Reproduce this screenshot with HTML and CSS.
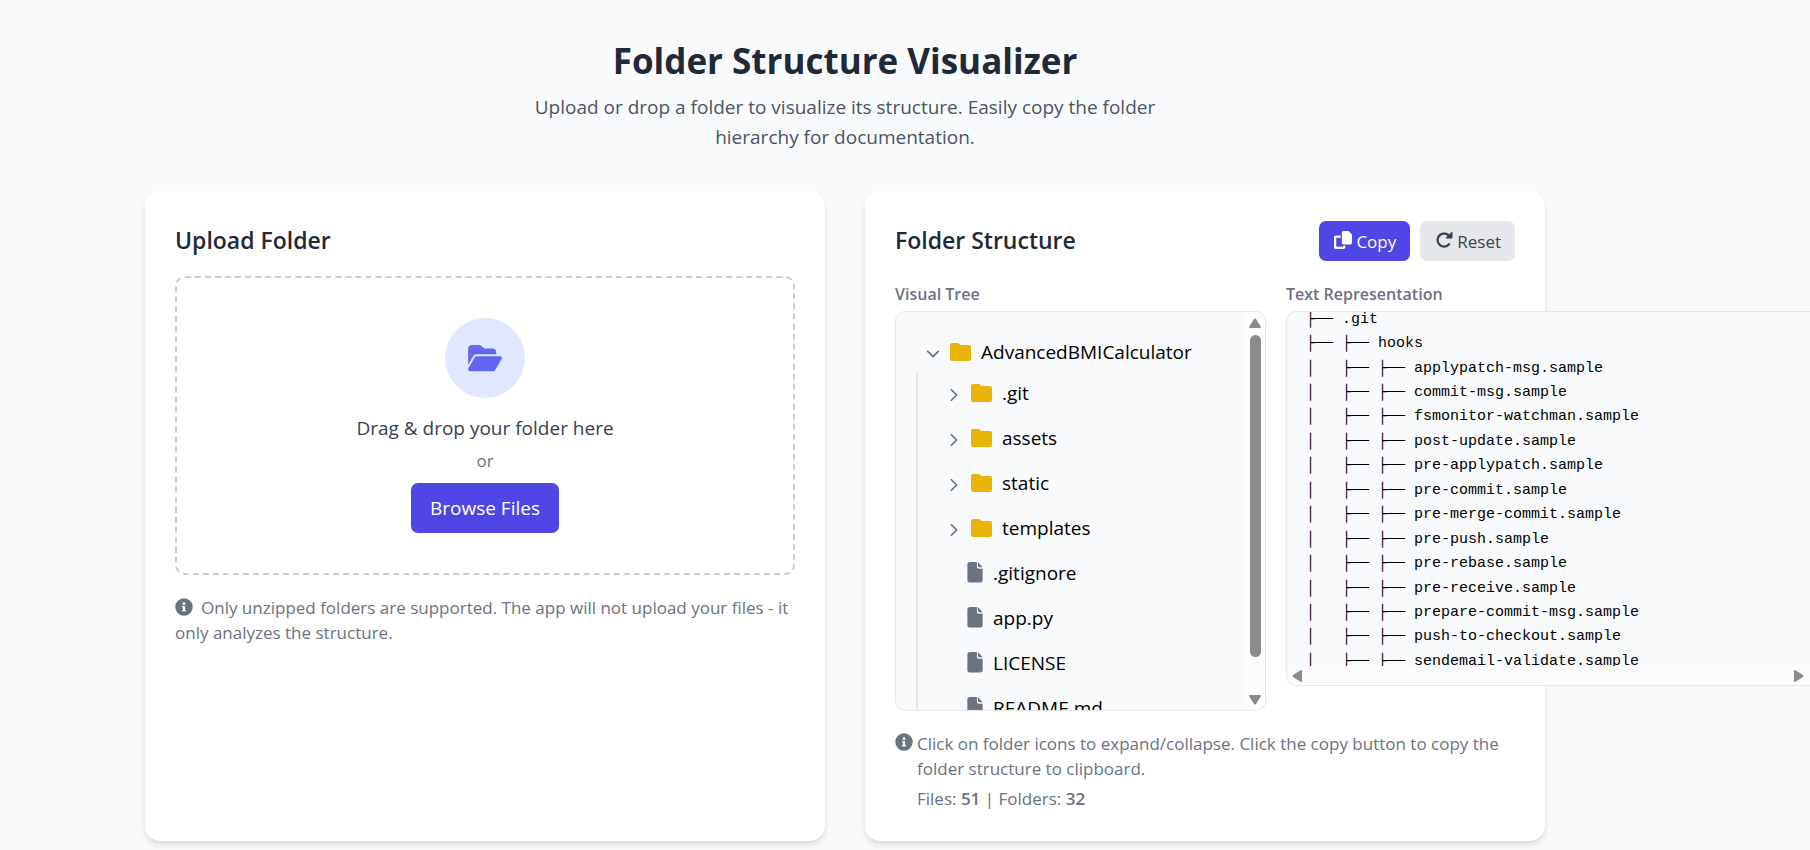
FILE: index.html
```html
<!DOCTYPE html>
<html lang="en">
<head>
<meta charset="utf-8">
<title>Folder Structure Visualizer</title>
<link rel="stylesheet" href="styles.css">
</head>
<body>
<svg class="sprite" aria-hidden="true">
  <symbol id="i-folder" viewBox="0 0 21 18"><path d="M2 0h5.500a2 2 0 0 1 1.400.6l.8.800a2 2 0 0 0 1.400.6H19a2 2 0 0 1 2 2v12a2 2 0 0 1-2 2H2a2 2 0 0 1-2-2V2a2 2 0 0 1 2-2z"/></symbol>
  <symbol id="i-file" viewBox="0 0 16 22"><path d="M3 0h7v5a2 2 0 0 0 2 2h4v12a2.500 2.500 0 0 1-2.500 2.500h-11A2.500 2.500 0 0 1 0 19V3a3 3 0 0 1 3-3zM11 0l5 5.500h-3.500A1.500 1.500 0 0 1 11 4z"/></symbol>
  <symbol id="i-down" viewBox="0 0 16 16"><path d="M2 5l6 6 6-6" fill="none" stroke="currentColor" stroke-width="2" stroke-linecap="round" stroke-linejoin="round"/></symbol>
  <symbol id="i-right" viewBox="0 0 16 16"><path d="M5 2l6 6-6 6" fill="none" stroke="currentColor" stroke-width="2" stroke-linecap="round" stroke-linejoin="round"/></symbol>
  <symbol id="i-info" viewBox="0 0 512 512"><path d="M256 8a248 248 0 1 0 0 496 248 248 0 0 0 0-496zm0 110a42 42 0 1 1 0 84 42 42 0 0 1 0-84zm56 254a12 12 0 0 1-12 12h-88a12 12 0 0 1-12-12v-24a12 12 0 0 1 12-12h12v-64h-12a12 12 0 0 1-12-12v-24a12 12 0 0 1 12-12h64a12 12 0 0 1 12 12v100h12a12 12 0 0 1 12 12z"/></symbol>
</svg>
<main class="page">
  <header class="intro">
    <h1 class="title">Folder Structure Visualizer</h1>
    <p class="lead">Upload or drop a folder to visualize its structure. Easily copy the folder hierarchy for documentation.</p>
  </header>
  <div class="cards">
    <section class="card">
      <div class="card-head"><h2 class="card-title">Upload Folder</h2></div>
      <div class="dropzone">
        <div class="drop-icon"><svg class="icon-open" viewBox="0 0 576 512"><path d="M88.700 223.800L0 375.800V96c0-35.300 28.700-64 64-64h117.500c17 0 33.300 6.700 45.300 18.700l26.500 26.500c12 12 28.300 18.700 45.300 18.700H416c35.300 0 64 28.700 64 64v32H144c-22.800 0-43.800 12.100-55.300 31.800zm27.600 16.100C122.100 230 132.600 224 144 224h400c11.500 0 22 6.100 27.700 16.100s5.700 22.200-.1 32.100l-112 192C453.900 474 443.400 480 432 480H32c-11.500 0-22-6.100-27.700-16.100s-5.700-22.200.1-32.100z"/></svg></div>
        <p class="drop-text">Drag &amp; drop your folder here</p>
        <p class="drop-or">or</p>
        <button class="btn btn-primary btn-large" type="button">Browse Files</button>
      </div>
      <p class="hint"><svg class="icon-info inline"><use href="#i-info"/></svg>Only unzipped folders are supported. The app will not upload your files - it only analyzes the structure.</p>
    </section>
    <section class="card">
      <div class="card-head">
        <h2 class="card-title">Folder Structure</h2>
        <div class="actions">
          <button class="btn btn-primary btn-icon" type="button"><svg class="icon-btn" viewBox="0 0 512 512"><path d="M272 0h125.500c8.500 0 16.600 3.400 22.600 9.400l82.500 82.500c6 6 9.400 14.100 9.400 22.600V336c0 26.500-21.500 48-48 48H272c-26.500 0-48-21.500-48-48V48c0-26.500 21.500-48 48-48zM48 128h144v64H64v256h192v-32h64v48c0 26.500-21.500 48-48 48H48c-26.500 0-48-21.500-48-48V176c0-26.500 21.500-48 48-48z"/></svg>Copy</button>
          <button class="btn btn-muted btn-icon" type="button"><svg class="icon-btn" viewBox="0 0 512 512"><path d="M420 170A185 185 0 1 0 400 375" fill="none" stroke="currentColor" stroke-width="64" stroke-linecap="round"/><path d="M470 30c10-10 27-3 27 11v150c0 13-11 24-24 24H323c-14 0-21-17-11-27z"/></svg>Reset</button>
        </div>
      </div>
      <div class="panels">
        <div class="panel-tree">
          <h3 class="label">Visual Tree</h3>
          <div class="tree-box">
            <div class="tree">
              <div class="row root"><svg class="chev"><use href="#i-down"/></svg><svg class="folder"><use href="#i-folder"/></svg><span>AdvancedBMICalculator</span></div>
              <ul class="children">
                <li class="row"><svg class="chev"><use href="#i-right"/></svg><svg class="folder"><use href="#i-folder"/></svg><span>.git</span></li>
                <li class="row"><svg class="chev"><use href="#i-right"/></svg><svg class="folder"><use href="#i-folder"/></svg><span>assets</span></li>
                <li class="row"><svg class="chev"><use href="#i-right"/></svg><svg class="folder"><use href="#i-folder"/></svg><span>static</span></li>
                <li class="row"><svg class="chev"><use href="#i-right"/></svg><svg class="folder"><use href="#i-folder"/></svg><span>templates</span></li>
                <li class="row leaf"><svg class="file"><use href="#i-file"/></svg><span>.gitignore</span></li>
                <li class="row leaf"><svg class="file"><use href="#i-file"/></svg><span>app.py</span></li>
                <li class="row leaf"><svg class="file"><use href="#i-file"/></svg><span>LICENSE</span></li>
                <li class="row leaf"><svg class="file"><use href="#i-file"/></svg><span>README.md</span></li>
              </ul>
            </div>
            <div class="vbar"><svg class="arrow" viewBox="0 0 12 10"><path d="M5 1q1-1 2 0l5 8q0 1-1 1H1q-1 0-1-1z"/></svg><div class="thumb"></div><svg class="arrow" viewBox="0 0 12 10"><path d="M5 9q1 1 2 0l5-8q0-1-1-1H1Q0 0 0 1z"/></svg></div>
          </div>
        </div>
        <div class="panel-text">
          <h3 class="label">Text Representation</h3>
          <div class="text-box">
            <div class="text-view"><pre class="listing">├── .git
├── ├── hooks
│   ├── ├── applypatch-msg.sample
│   ├── ├── commit-msg.sample
│   ├── ├── fsmonitor-watchman.sample
│   ├── ├── post-update.sample
│   ├── ├── pre-applypatch.sample
│   ├── ├── pre-commit.sample
│   ├── ├── pre-merge-commit.sample
│   ├── ├── pre-push.sample
│   ├── ├── pre-rebase.sample
│   ├── ├── pre-receive.sample
│   ├── ├── prepare-commit-msg.sample
│   ├── ├── push-to-checkout.sample
│   ├── ├── sendemail-validate.sample</pre></div>
            <div class="hbar"><svg class="arrow-h" viewBox="0 0 10 12"><path d="M1 5q-1 1 0 2l8 5q1 0 1-1V1q0-1-1-1z"/></svg><svg class="arrow-h" viewBox="0 0 10 12"><path d="M9 5q1 1 0 2l-8 5q-1 0-1-1V1q0-1 1-1z"/></svg></div>
          </div>
        </div>
      </div>
      <div class="footnote">
        <svg class="icon-info"><use href="#i-info"/></svg>
        <div>
          <p class="note">Click on folder icons to expand/collapse. Click the copy button to copy the folder structure to clipboard.</p>
          <p class="note counts">Files: <strong>51</strong> | Folders: <strong>32</strong></p>
        </div>
      </div>
    </section>
  </div>
</main>
</body>
</html>
```
FILE: styles.css
```css
* { box-sizing: border-box; }
body { margin: 0; background: #f9fafb; color: #000; font: 19px/30px "Open Sans", "Noto Sans", sans-serif; overflow-x: hidden; }
h1, h2, h3, p, ul, pre { margin: 0; padding: 0; font-weight: inherit; }
svg { display: block; flex: none; fill: currentColor; }
.sprite { position: absolute; width: 0; height: 0; }
.page { max-width: 1400px; margin: 0 265px 0 145px; padding: 38px 0 8px; }
.intro { max-width: 640px; margin: 0 auto 39px; text-align: center; }
.title { color: #1f2937; font-size: 35px; line-height: 45px; font-weight: 700; margin-bottom: 9px; }
.lead { color: #4b5563; }
.cards { display: grid; grid-template-columns: repeat(2, minmax(0, 1fr)); gap: 40px; }
.card { background: #fff; border-radius: 15px; padding: 30px; box-shadow: 0 5px 8px -1px rgba(0, 0, 0, .1), 0 2px 5px -2px rgba(0, 0, 0, .1); }
.card-head { display: flex; justify-content: space-between; align-items: flex-start; min-height: 40px; }
.card-title { color: #1f2937; font-size: 23px; line-height: 38px; font-weight: 600; }
.dropzone { display: flex; flex-direction: column; align-items: center; margin-top: 15px; padding: 40px; border: 2px dashed #ccc; border-radius: 10px; }
.drop-icon { display: grid; place-items: center; width: 80px; height: 80px; margin-bottom: 15px; border-radius: 50%; background: #e0e7ff; color: #6366f1; }
.icon-open { width: 34px; height: 30px; }
.drop-text { color: #374151; }
.drop-or { color: #6b7280; font-size: 17px; line-height: 25px; margin: 5px 0 10px; }
.btn { display: flex; align-items: center; gap: 4px; height: 40px; padding: 0 15px; border: 0; border-radius: 7px; font: inherit; font-size: 17px; }
.btn-icon { padding: 2px 14px 0 15px; }
.btn-primary { background: #4f46e5; color: #fff; }
.btn-muted { background: #e5e7eb; color: #374151; }
.btn-large { height: 50px; padding: 0 19px; font-size: 19px; }
.icon-btn { width: 18px; height: 18px; margin-bottom: 4px; }
.actions { display: flex; gap: 10px; }
.hint, .note { color: #6b7280; font-size: 17px; line-height: 25px; }
.hint { margin-top: 20px; }
.icon-info { width: 18px; height: 18px; color: #6b7280; }
.inline { display: inline-block; vertical-align: -2px; margin-right: 8px; }
.panels { display: flex; align-items: flex-start; gap: 20px; margin-top: 20px; }
.panel-tree { flex: none; width: 371px; }
.panel-text { flex: none; width: 525px; }
.label { color: #6b7280; font-size: 16px; line-height: 26px; font-weight: 600; margin-bottom: 4px; }
.tree-box { display: flex; height: 400px; overflow: hidden; border: 1px solid #e5e7eb; border-radius: 10px; background: #f9fafb; }
.tree { flex: 1; padding: 19px 20px; min-width: 0; }
.row { display: flex; align-items: center; gap: 10px; height: 45px; padding-bottom: 4px; list-style: none; }
.root { height: 41px; padding: 0 0 0 10px; }
.chev { width: 14px; height: 14px; margin-top: 4px; color: #6b7280; }
.folder { width: 21px; height: 18px; color: #eab308; }
.file { width: 16px; height: 21px; color: #6b7280; }
.children { border-left: 2px solid #e5e7eb; padding-left: 29px; }
.leaf { padding-left: 20px; }
.vbar { display: flex; flex-direction: column; align-items: center; justify-content: space-between; flex: none; width: 20px; padding: 6px 0 5px; background: #fcfcfc; color: #8b8b8b; }
.arrow { width: 12px; height: 10px; }
.thumb { width: 11px; height: 322px; margin-bottom: 32px; border-radius: 6px; background: #8b8b8b; }
.text-box { border: 1px solid #e5e7eb; border-right: 0; border-radius: 10px 0 0 10px; overflow: hidden; background: #f9fafb; }
.text-view { display: flex; align-items: center; height: 354px; overflow: hidden; padding: 4px 0 0 19px; }
.listing { font: 15px/1.63 "Liberation Mono", monospace; }
.hbar { display: flex; align-items: center; justify-content: space-between; height: 19px; padding: 0 7px 0 5px; background: #fcfcfc; color: #8b8b8b; }
.arrow-h { width: 10px; height: 12px; }
.footnote { display: flex; gap: 4px; margin-top: 20px; }
.footnote .icon-info { margin-top: 2px; }
.counts { margin-top: 5px; }
.counts strong { font-weight: 600; }
```
